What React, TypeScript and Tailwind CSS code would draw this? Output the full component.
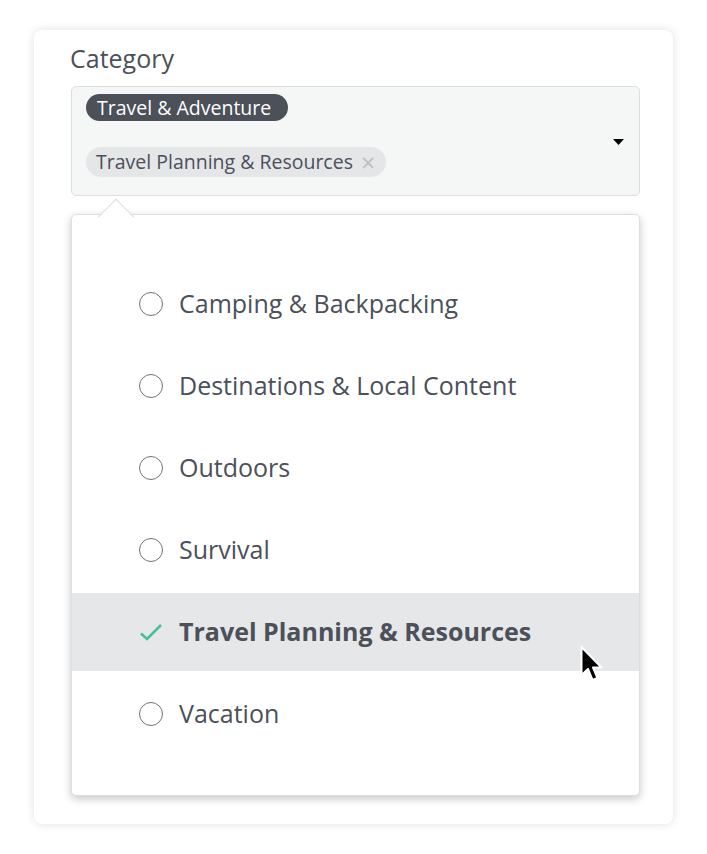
import React from "react";

const items = [
  { label: "Camping & Backpacking", selected: false },
  { label: "Destinations & Local Content", selected: false },
  { label: "Outdoors", selected: false },
  { label: "Survival", selected: false },
  { label: "Travel Planning & Resources", selected: true },
  { label: "Vacation", selected: false },
];

export default function App() {
  return (
    <div
      className="min-h-[854px] w-[707px] bg-white pt-[30px] pl-[34px]"
      style={{ fontFamily: '"Open Sans", "Noto Sans", sans-serif' }}
    >
      <div className="relative w-[639px] h-[794px] rounded-[8px] bg-white shadow-[0_0_10px_rgba(0,0,0,0.12)] pl-[37px] pr-[33px] pt-[12px]">
        <div className="text-[25px] leading-[32px] text-[#4b5059] -ml-[1px]">Category</div>
        <div className="mt-[12px] relative h-[110px] rounded-[5px] border border-[#dcdedf] bg-[#f5f6f6] pl-[14px] pt-[7px]">
          <div className="flex">
            <span className="h-[27px] rounded-full bg-[#4b5059] pl-[11px] pr-[17px] text-[19.5px] leading-[27px] text-white">
              Travel &amp; Adventure
            </span>
          </div>
          <div className="flex mt-[26px]">
            <span className="flex items-center h-[30px] rounded-full bg-[#e4e6e8] pl-[10px] pr-[11px] text-[19.5px] text-[#4b5059]">
              Travel Planning &amp; Resources
              <span className="ml-[8px] text-[25px] leading-none text-[#bcbfc3]">×</span>
            </span>
          </div>
          <svg
            className="absolute left-[541px] top-[52px]"
            width="11"
            height="6"
            viewBox="0 0 11 6"
          >
            <path d="M0 0 L11 0 L5.5 6 Z" fill="#000" />
          </svg>
        </div>
        <div className="relative mt-[18px] h-[582px] rounded-[5px] border border-[#dcdedf] bg-white shadow-[0_3px_8px_rgba(0,0,0,0.22)] pt-[50px]">
          <div className="absolute left-[31px] -top-[11px] w-[26px] h-[26px] rotate-45 bg-white border-t border-l border-[#dcdedf]" />
          <div className="flex flex-col gap-[4px]">
            {items.map((it) => (
              <div
                key={it.label}
                className={
                  "flex items-center h-[78px] pl-[67px] " +
                  (it.selected ? "bg-[#e6e7e9]" : "")
                }
              >
                {it.selected ? (
                  <svg width="24" height="24" viewBox="0 0 24 24" className="shrink-0">
                    <path
                      d="M2 13.5 L8 19 L22 5"
                      fill="none"
                      stroke="#46c095"
                      strokeWidth="2.6"
                    />
                  </svg>
                ) : (
                  <span className="shrink-0 w-[24px] h-[24px] rounded-full border-[1.6px] border-[#6f7379]" />
                )}
                <span
                  className={
                    "ml-[16px] text-[25px] text-[#4b5059] " +
                    (it.selected ? "font-bold" : "")
                  }
                >
                  {it.label}
                </span>
              </div>
            ))}
          </div>
        </div>
        <svg
          className="absolute left-[545px] top-[615px]"
          width="26"
          height="40"
          viewBox="0 0 26 40"
        >
          <path
            d="M2.5 2 L2.5 30 L9 24 L13.5 35 L18.5 33 L14 22.5 L22.5 22.5 Z"
            fill="#000"
            stroke="#fff"
            strokeWidth="2"
            strokeLinejoin="round"
          />
        </svg>
      </div>
    </div>
  );
}
